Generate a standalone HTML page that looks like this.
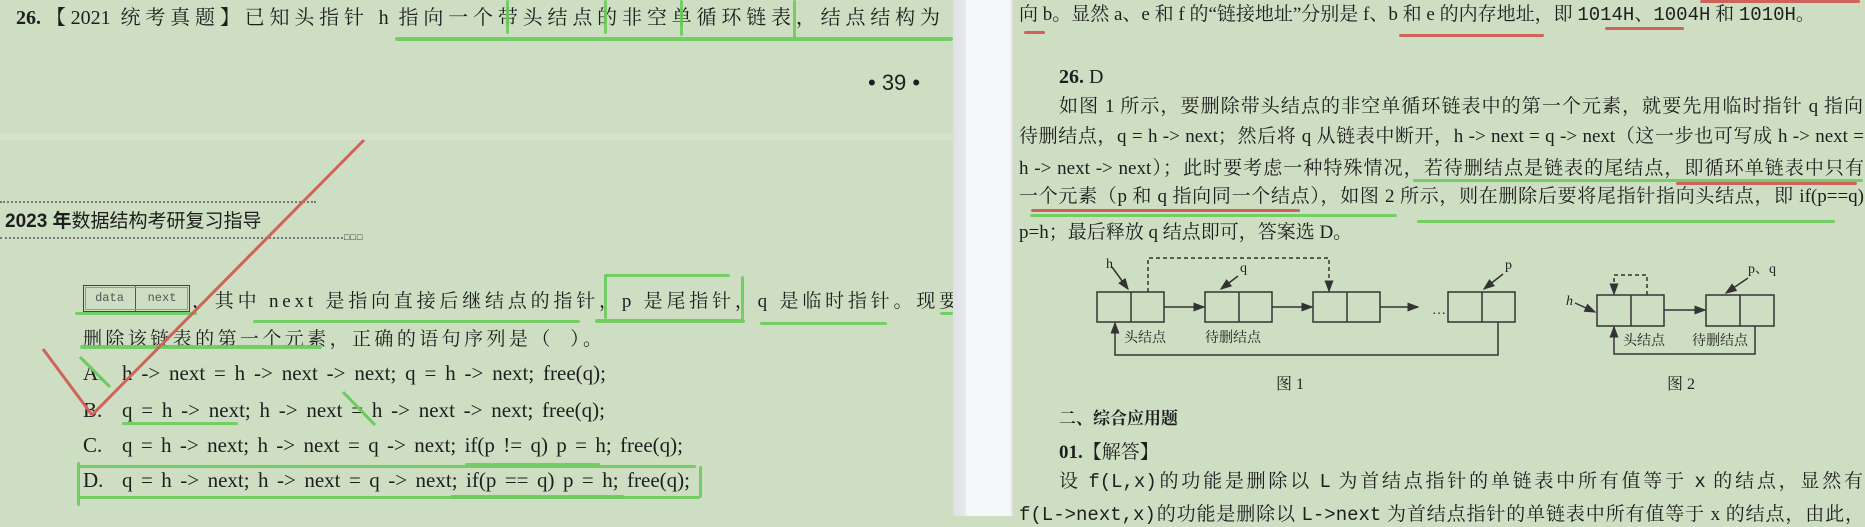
<!DOCTYPE html>
<html><head><meta charset="utf-8"><style>
*{margin:0;padding:0;box-sizing:border-box}
body{width:1865px;height:516px;overflow:hidden;background:#cddec3;position:relative;font-family:"Liberation Serif","Noto Serif CJK SC",serif;color:#1e1e1e}
.a{position:absolute}
.l{position:absolute;white-space:nowrap;text-align:justify;text-align-last:justify;height:24px;line-height:24px;font-size:19px}
.g{position:absolute;background:#6ccb5c;opacity:.9;border-radius:2px}
.r{position:absolute;background:#d0625c;border-radius:2px}
.b{font-weight:bold}
.m{font-family:"Liberation Mono","Noto Sans CJK SC",monospace}
svg{position:absolute;left:0;top:0}
#lp{position:absolute;left:0;top:0;width:953px;height:516px;overflow:hidden}
</style></head><body>
<!-- page chrome -->
<div class="a" style="left:953px;top:0;width:13px;height:516px;background:linear-gradient(90deg,#dfe0e5,#e9eaee)"></div>
<div class="a" style="left:966px;top:0;width:45px;height:516px;background:#f5f6f8"></div>
<div class="a" style="left:1011px;top:0;width:2px;height:516px;background:#e2e4e6"></div>

<div id="lp">
<div class="a" style="left:0;top:133px;width:953px;height:7px;background:#d4e3ca"></div>
<div class="l" style="left:16px;top:6px;width:924px;font-size:20px"><span class="b">26.</span>【2021 统考真题】已知头指针 h 指向一个带头结点的非空单循环链表，结点结构为</div>
<div class="g" style="left:395px;top:37px;width:558px;height:4px"></div>
<div class="g" style="left:506px;top:0;width:3px;height:34px"></div>
<div class="g" style="left:604px;top:0;width:3px;height:34px"></div>
<div class="g" style="left:680px;top:0;width:3px;height:36px"></div>
<div class="g" style="left:793px;top:0;width:3px;height:38px"></div>
<div class="a" style="left:868px;top:70px;font-family:'Liberation Sans',sans-serif;font-size:22px;line-height:26px">• 39 •</div>

<div class="a" style="left:0;top:201px;width:316px;border-top:2px dotted #777"></div>
<div class="l" style="left:5px;top:210px;width:312px;font-family:'Liberation Sans','Noto Sans CJK SC',sans-serif;font-size:19px;text-align-last:auto"><b>2023 年</b>数据结构考研复习指导</div>
<div class="a" style="left:0;top:237px;width:343px;border-top:2px dotted #777"></div>
<div class="a" style="left:344px;top:232px;font-size:9px;letter-spacing:1px;font-family:'Liberation Sans',sans-serif">□□□</div>

<div class="a m" style="left:83px;top:285px;width:107px;height:27px;border:1px solid #444;outline:1px solid #999;outline-offset:-3px;font-size:12px;color:#555;line-height:25px"><span style="display:inline-block;width:52px;text-align:center;border-right:1px solid #555">data</span><span style="display:inline-block;width:52px;text-align:center">next</span></div>
<div class="l" style="left:192px;top:290px;width:800px;font-size:19px;text-align-last:auto;letter-spacing:3.8px">，其中 next 是指向直接后继结点的指针，p 是尾指针，q 是临时指针。现要</div>
<div class="l" style="left:83px;top:328px;width:520px;font-size:19px;letter-spacing:1px">删除该链表的第一个元素，正确的语句序列是（&nbsp;&nbsp;）。</div>

<div class="a" style="left:83px;top:360px;font-size:21px;line-height:26px">A.</div>
<div class="l" style="left:122px;top:360px;width:484px;font-size:21px;height:26px;line-height:26px">h -&gt; next = h -&gt; next -&gt; next; q = h -&gt; next; free(q);</div>
<div class="a" style="left:83px;top:397px;font-size:21px;line-height:26px">B.</div>
<div class="l" style="left:122px;top:397px;width:483px;font-size:21px;height:26px;line-height:26px">q = h -&gt; next; h -&gt; next = h -&gt; next -&gt; next; free(q);</div>
<div class="a" style="left:83px;top:432px;font-size:21px;line-height:26px">C.</div>
<div class="l" style="left:122px;top:432px;width:561px;font-size:21px;height:26px;line-height:26px">q = h -&gt; next; h -&gt; next = q -&gt; next; if(p != q) p = h; free(q);</div>
<div class="a" style="left:83px;top:467px;font-size:21px;line-height:26px">D.</div>
<div class="l" style="left:122px;top:467px;width:568px;font-size:21px;height:26px;line-height:26px">q = h -&gt; next; h -&gt; next = q -&gt; next; if(p == q) p = h; free(q);</div>

<div class="g" style="left:75px;top:312px;width:122px;height:3px"></div>
<div class="g" style="left:253px;top:320px;width:327px;height:3px"></div>
<div class="g" style="left:605px;top:274px;width:125px;height:3px"></div>
<div class="g" style="left:604px;top:274px;width:3px;height:45px"></div>
<div class="g" style="left:741px;top:276px;width:3px;height:44px"></div>
<div class="g" style="left:595px;top:319px;width:150px;height:4px"></div>
<div class="g" style="left:760px;top:322px;width:127px;height:3px"></div>
<div class="g" style="left:940px;top:312px;width:13px;height:3px"></div>
<div class="g" style="left:80px;top:345px;width:242px;height:4px"></div>
<div class="g" style="left:122px;top:422px;width:116px;height:3px"></div>
<div class="g" style="left:78px;top:465px;width:618px;height:3px"></div>
<div class="g" style="left:465px;top:463px;width:135px;height:3px"></div>
<div class="g" style="left:78px;top:496px;width:622px;height:3px"></div>
<div class="g" style="left:450px;top:495px;width:175px;height:4px"></div>
<div class="g" style="left:77px;top:462px;width:3px;height:44px"></div>
<div class="g" style="left:699px;top:466px;width:3px;height:32px"></div>
<svg width="953" height="516">
<line x1="80" y1="357" x2="110" y2="387" stroke="#6ccb5c" stroke-width="3"/>
<line x1="343" y1="392" x2="375" y2="425" stroke="#6ccb5c" stroke-width="3"/>
<line x1="364" y1="140" x2="92" y2="415" stroke="#d0625c" stroke-width="3"/>
<line x1="43" y1="349" x2="92" y2="415" stroke="#d0625c" stroke-width="3"/>
</svg>
</div>

<!-- right page -->
<div class="l" style="left:1019px;top:3px;width:845px;font-size:19px;text-align-last:auto">向 b。显然 a、e 和 f 的“链接地址”分别是 f、b 和 e 的内存地址，即 <span class="m">1014H</span>、<span class="m">1004H</span> 和 <span class="m">1010H</span>。</div>
<div class="r" style="left:1700px;top:0;width:160px;height:3px"></div>
<div class="r" style="left:1024px;top:31px;width:21px;height:3px"></div>
<div class="r" style="left:1399px;top:34px;width:145px;height:3px"></div>
<div class="r" style="left:1605px;top:27px;width:79px;height:3px"></div>

<div class="a b" style="left:1059px;top:65px;font-size:20px;line-height:24px">26. <span style="font-weight:normal">D</span></div>
<div class="l" style="left:1059px;top:95px;width:804px">如图 1 所示，要删除带头结点的非空单循环链表中的第一个元素，就要先用临时指针 q 指向</div>
<div class="l" style="left:1019px;top:125px;width:845px">待删结点，q = h -&gt; next；然后将 q 从链表中断开，h -&gt; next = q -&gt; next（这一步也可写成 h -&gt; next =</div>
<div class="l" style="left:1019px;top:157px;width:845px">h -&gt; next -&gt; next）；此时要考虑一种特殊情况，若待删结点是链表的尾结点，即循环单链表中只有</div>
<div class="l" style="left:1019px;top:185px;width:845px">一个元素（p 和 q 指向同一个结点），如图 2 所示，则在删除后要将尾指针指向头结点，即 if(p==q)</div>
<div class="l" style="left:1019px;top:221px;width:318px">p=h；最后释放 q 结点即可，答案选 D。</div>
<div class="g" style="left:1413px;top:179px;width:450px;height:3px"></div>
<div class="r" style="left:1676px;top:182px;width:181px;height:3px"></div>
<div class="r" style="left:1031px;top:209px;width:269px;height:3px"></div>
<div class="g" style="left:1030px;top:214px;width:367px;height:3px"></div>
<div class="g" style="left:1417px;top:220px;width:418px;height:3px"></div>

<svg width="1865" height="516" style="font-family:'Liberation Serif','Noto Serif CJK SC',serif">
<defs><marker id="ar" markerWidth="8" markerHeight="6" refX="7" refY="3" orient="auto"><path d="M0,0 L8,3 L0,6 z" fill="#333"/></marker></defs>
<g fill="none" stroke="#333" stroke-width="1.5">
<rect x="1097" y="292" width="67" height="30"/><line x1="1131" y1="292" x2="1131" y2="322"/>
<rect x="1205" y="292" width="67" height="30"/><line x1="1239" y1="292" x2="1239" y2="322"/>
<rect x="1313" y="292" width="67" height="30"/><line x1="1347" y1="292" x2="1347" y2="322"/>
<rect x="1448" y="292" width="67" height="30"/><line x1="1482" y1="292" x2="1482" y2="322"/>
<line x1="1164" y1="307" x2="1204" y2="307" marker-end="url(#ar)"/>
<line x1="1272" y1="307" x2="1312" y2="307" marker-end="url(#ar)"/>
<line x1="1380" y1="307" x2="1418" y2="307" marker-end="url(#ar)"/>
<polyline points="1498,322 1498,355 1115,355 1115,323" marker-end="url(#ar)"/>
<polyline points="1148,292 1148,258 1329,258 1329,291" stroke-dasharray="4,3" marker-end="url(#ar)"/>
<line x1="1112" y1="267" x2="1128" y2="289" marker-end="url(#ar)"/>
<line x1="1238" y1="276" x2="1221" y2="289" marker-end="url(#ar)"/>
<line x1="1503" y1="274" x2="1484" y2="289" marker-end="url(#ar)"/>
<rect x="1597" y="295" width="67" height="31"/><line x1="1631" y1="295" x2="1631" y2="326"/>
<rect x="1706" y="295" width="68" height="31"/><line x1="1740" y1="295" x2="1740" y2="326"/>
<line x1="1664" y1="310" x2="1705" y2="310" marker-end="url(#ar)"/>
<polyline points="1647,295 1647,275 1614,275 1614,294" stroke-dasharray="4,3" marker-end="url(#ar)"/>
<polyline points="1755,326 1755,354 1614,354 1614,327" marker-end="url(#ar)"/>
<line x1="1575" y1="303" x2="1595" y2="312" marker-end="url(#ar)"/>
<line x1="1748" y1="278" x2="1726" y2="293" marker-end="url(#ar)"/>
</g>
<g fill="#222" font-size="14">
<text x="1106" y="268">h</text><text x="1240" y="272">q</text><text x="1505" y="269">p</text>
<text x="1432" y="314">…</text>
<text x="1124" y="342">头结点</text><text x="1205" y="342">待删结点</text>
<text x="1566" y="305" font-style="italic">h</text><text x="1748" y="273">p、q</text>
<text x="1623" y="345">头结点</text><text x="1692" y="345">待删结点</text>
<text x="1276" y="389" font-size="16">图 1</text><text x="1667" y="389" font-size="16">图 2</text>
</g>
</svg>

<div class="a b" style="left:1059px;top:405px;font-size:17px;line-height:24px;font-family:'Noto Serif CJK SC',serif">二、综合应用题</div>
<div class="a" style="left:1059px;top:441px;font-size:19px;line-height:24px"><b>01.</b>【解答】</div>
<div class="l" style="left:1059px;top:470px;width:804px">设 <span class="m">f(L,x)</span>的功能是删除以 <span class="m">L</span> 为首结点指针的单链表中所有值等于 <span class="m">x</span> 的结点，显然有</div>
<div class="l" style="left:1019px;top:503px;width:845px"><span class="m">f(L-&gt;next,x)</span>的功能是删除以 <span class="m">L-&gt;next</span> 为首结点指针的单链表中所有值等于 x 的结点，由此，</div>
</body></html>
